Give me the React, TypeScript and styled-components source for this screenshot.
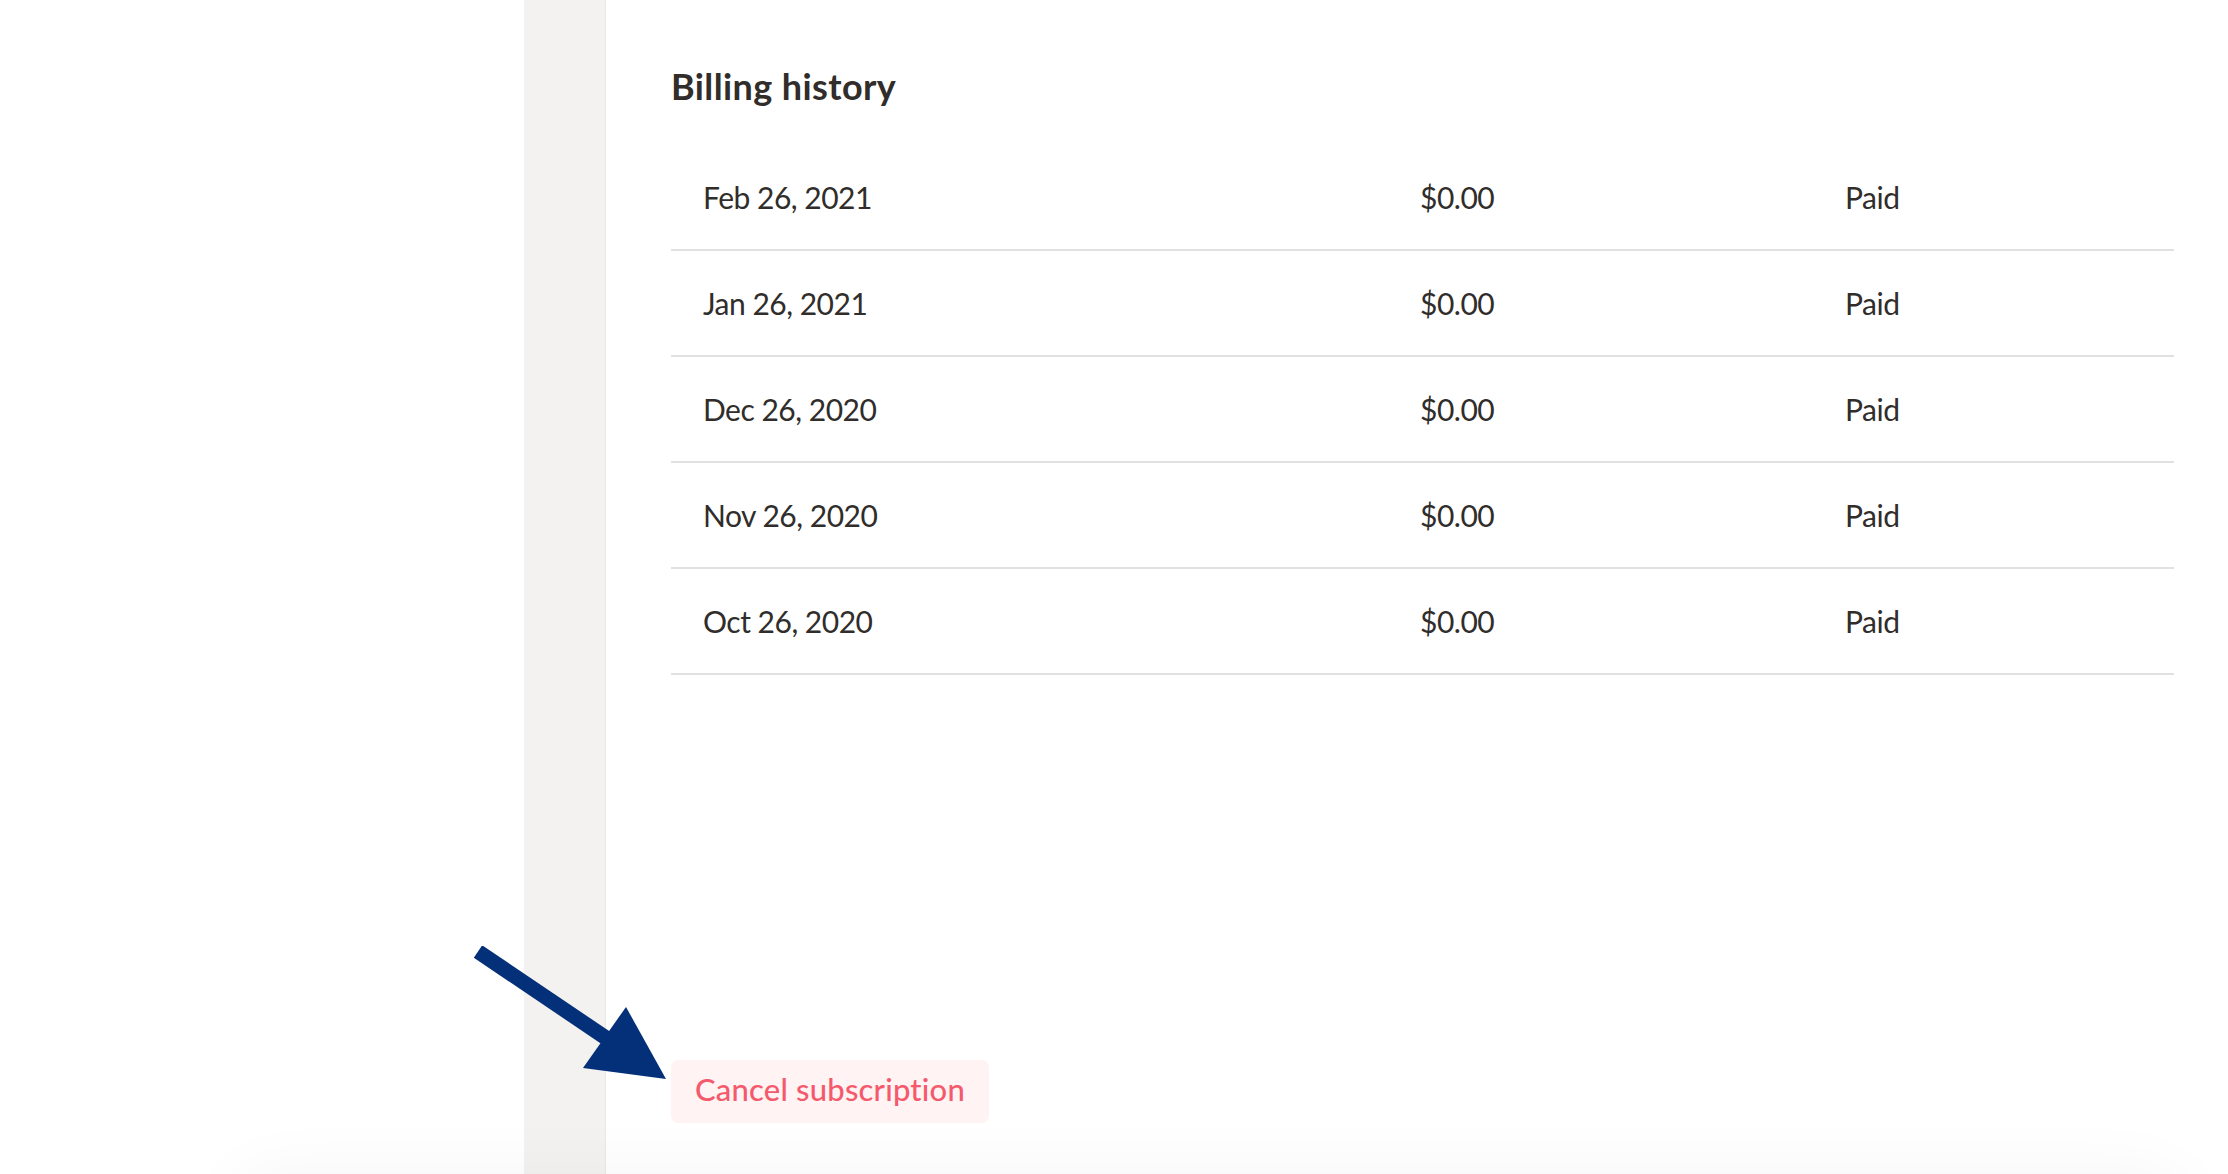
import React from 'react';
import styled, { createGlobalStyle } from 'styled-components';

const GlobalStyle = createGlobalStyle`
  html, body {
    margin: 0;
    padding: 0;
    background: #ffffff;
    font-family: Lato, 'Open Sans', sans-serif;
    overflow: hidden;
  }
`;

interface IPayment {
  id: number;
  date: string;
  amount: string;
  status: string;
}

const payments: IPayment[] = [
  { id: 1, date: 'Feb 26, 2021', amount: '$0.00', status: 'Paid' },
  { id: 2, date: 'Jan 26, 2021', amount: '$0.00', status: 'Paid' },
  { id: 3, date: 'Dec 26, 2020', amount: '$0.00', status: 'Paid' },
  { id: 4, date: 'Nov 26, 2020', amount: '$0.00', status: 'Paid' },
  { id: 5, date: 'Oct 26, 2020', amount: '$0.00', status: 'Paid' },
];

const Arrow = () => (
  <ArrowSvg width="220" height="150" viewBox="0 0 220 150">
    <path d="M6 5.5 L140 96" stroke="#043079" strokeWidth="15" strokeLinecap="butt" fill="none" />
    <path d="M194 133 L154 61 L111 122 Z" fill="#043079" />
  </ArrowSvg>
);

const App = () => {
  return (
    <Page>
      <GlobalStyle />
      <Blank />
      <Sidebar />
      <Main>
        <Title>Billing history</Title>
        <Table>
          {payments.map(value => (
            <Row key={value.id}>
              <Cell>{value.date}</Cell>
              <Cell>{value.amount}</Cell>
              <Cell>{value.status}</Cell>
            </Row>
          ))}
        </Table>
        <CancelButton>Cancel subscription</CancelButton>
      </Main>
      <Arrow />
      <FooterShadow />
    </Page>
  );
};

const Page = styled.div`
  position: relative;
  display: flex;
  width: 2228px;
  height: 1174px;
  overflow: hidden;
`;

const Blank = styled.div`
  width: 524px;
  flex-shrink: 0;
`;

const Sidebar = styled.aside`
  width: 81px;
  flex-shrink: 0;
  background: #f3f2f1;
  border-right: 1px solid #e9e8e6;
`;

const Main = styled.main`
  flex: 1;
  display: flex;
  flex-direction: column;
  align-items: flex-start;
  padding: 65px 54px 0 65px;
`;

const Title = styled.h2`
  margin: 0;
  font-size: 36px;
  line-height: 42px;
  font-weight: 700;
  letter-spacing: 0.4px;
  color: #302d2b;
`;

const Table = styled.section`
  width: 100%;
  margin-top: 38px;
  display: flex;
  flex-direction: column;
`;

const Row = styled.div`
  display: grid;
  grid-template-columns: 717px 425px 1fr;
  align-items: center;
  height: 104px;
  padding-left: 32px;
  border-bottom: 2px solid #e1e1e1;
`;

const Cell = styled.span`
  font-size: 30px;
  line-height: 36px;
  letter-spacing: -0.5px;
  color: #302d2b;
`;

const CancelButton = styled.button`
  margin-top: 385px;
  height: 63px;
  padding: 0 24px 6px;
  border: none;
  border-radius: 7px;
  background: #fff3f4;
  color: #f45a6c;
  font-family: Lato, 'Open Sans', sans-serif;
  font-size: 31px;
  font-weight: 500;
  letter-spacing: 0.2px;
  cursor: pointer;
`;

const ArrowSvg = styled.svg`
  position: absolute;
  left: 472px;
  top: 946px;
`;

const FooterShadow = styled.div`
  position: absolute;
  left: 230px;
  right: 40px;
  top: 1180px;
  height: 100px;
  border-radius: 80px;
  box-shadow: 0 -6px 70px rgba(0, 0, 0, 0.045);
  pointer-events: none;
`;

export default App;
